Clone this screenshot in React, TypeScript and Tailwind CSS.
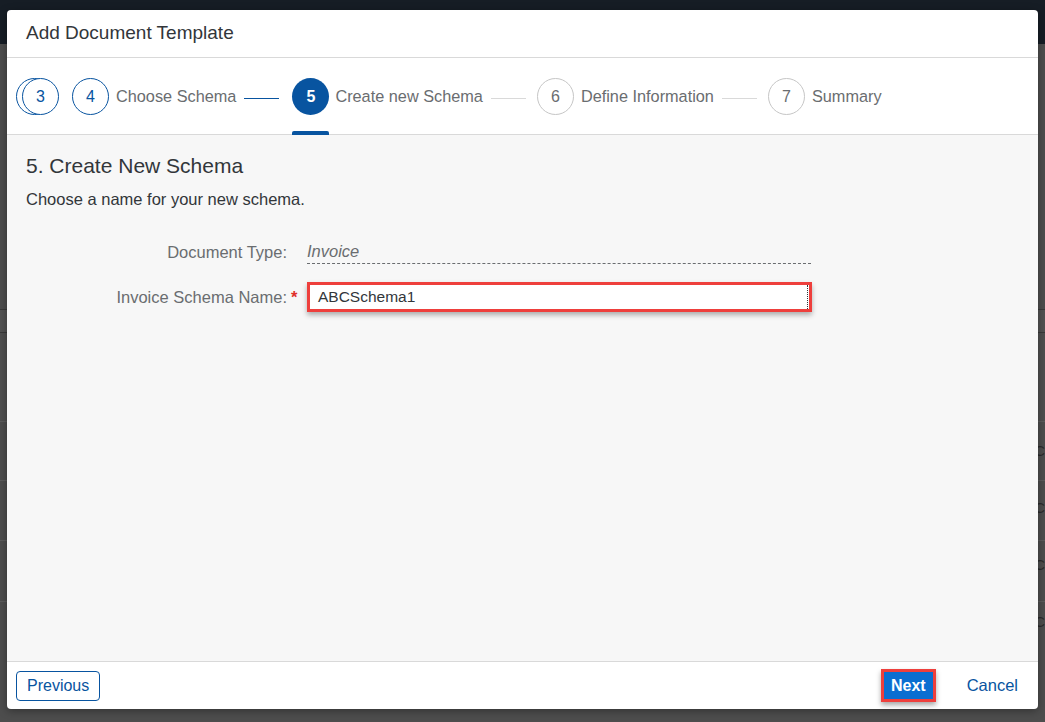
import React from "react";

const font = { fontFamily: '"Liberation Sans", Arial, sans-serif' };

function StepCircle({ n, state }: { n: number; state: "done" | "active" | "todo" }) {
  if (state === "active") {
    return (
      <div className="w-[37px] h-[37px] rounded-full bg-[#0854a0] flex items-center justify-center text-white text-[16px] font-bold shrink-0">
        {n}
      </div>
    );
  }
  return (
    <div
      className={
        "w-[37px] h-[37px] rounded-full bg-white flex items-center justify-center text-[16px] shrink-0 border " +
        (state === "done" ? "border-[#0854a0] text-[#0854a0]" : "border-[#c6c6c6] text-[#6a6d70]")
      }
    >
      {n}
    </div>
  );
}

function Connector({ done }: { done?: boolean }) {
  return <div className={"w-[35px] h-px mx-2 mt-[3px] " + (done ? "bg-[#0854a0]" : "bg-[#d9d9d9]")} />;
}

export default function App() {
  return (
    <div className="relative w-[1045px] h-[722px] bg-[#4d4d4d] overflow-hidden" style={font}>
      {/* dimmed page behind the dialog */}
      <div className="h-[44px] bg-[#161d25]" />
      <div className="h-[265px]" />
      <div className="h-px bg-[#3a3a3a]" />
      <div className="h-[22px] bg-[#525252]" />
      <div className="h-px bg-[#3a3a3a]" />
      <div className="h-[88px] bg-[#4f4f4f]" />
      <div className="h-px bg-[#5c5c5c]" />
      <div className="h-[58px]" />
      <div className="h-px bg-[#5c5c5c]" />
      <div className="h-[59px]" />
      <div className="h-px bg-[#5c5c5c]" />
      <div className="h-[60px]" />
      <div className="h-px bg-[#5c5c5c]" />
      <div className="absolute right-0 top-[443px] flex flex-col gap-[42px] text-[15px] text-[#2a2a2a] leading-none">
        <span>.C</span>
        <span>.C</span>
        <span>.C</span>
        <span>.C</span>
      </div>

      {/* dialog */}
      <div className="absolute left-[7px] top-[10px] w-[1031px] h-[699px] bg-white rounded-[4px] shadow-[0_2px_8px_rgba(0,0,0,0.35)] flex flex-col overflow-hidden">
        <div className="h-[48px] border-b border-[#d9d9d9] flex items-center pl-[19px] text-[19px] text-[#32363a]">
          Add Document Template
        </div>

        <div className="h-[77px] border-b border-[#d9d9d9] flex items-start pt-[20px] pl-[9px] text-[16.3px] text-[#6a6d70]">
          <div className="relative w-[43px] h-[38px] shrink-0 flex justify-end">
            <div className="absolute left-0 top-0 w-[37px] h-[37px] rounded-full border border-[#0854a0] bg-white" />
            <div className="relative">
              <StepCircle n={3} state="done" />
            </div>
          </div>
          <div className="ml-[13px] flex items-center h-[37px]">
            <StepCircle n={4} state="done" />
            <span className="ml-[7px]">Choose Schema</span>
            <Connector done />
          </div>
          <div className="ml-[5px] flex flex-col items-start">
            <div className="flex items-center h-[37px]">
              <StepCircle n={5} state="active" />
              <span className="ml-[6px]">Create new Schema</span>
              <Connector />
            </div>
            <div className="mt-[16px] w-[37px] h-[4px] rounded-t-[2px] bg-[#0854a0]" />
          </div>
          <div className="ml-[3px] flex items-center h-[37px]">
            <StepCircle n={6} state="todo" />
            <span className="ml-[7px]">Define Information</span>
            <Connector />
          </div>
          <div className="ml-[3px] flex items-center h-[37px]">
            <StepCircle n={7} state="todo" />
            <span className="ml-[7px]">Summary</span>
          </div>
        </div>

        <div className="flex-1 bg-[#f7f7f7] pl-[19px] pt-[19px]">
          <div className="text-[21px] text-[#32363a] leading-[24px]">5. Create New Schema</div>
          <div className="mt-[11px] text-[16.5px] leading-[20px] text-[#32363a]">Choose a name for your new schema.</div>

          <div className="mt-[31px] flex flex-col gap-[18px] text-[16.5px]">
            <div className="flex items-center h-[24px]">
              <div className="w-[276px] flex justify-end text-[#6a6d70]">
                <span>Document Type:</span>
                <span className="w-[15px]" />
              </div>
              <div className="ml-[5px] w-[504px] h-[24px] flex items-center border-b border-dashed border-[#6a6d70] italic text-[#6a6d70]">
                Invoice
              </div>
            </div>
            <div className="flex items-center h-[30px]">
              <div className="w-[276px] flex justify-end text-[#6a6d70]">
                <span>Invoice Schema Name:</span>
                <span className="w-[15px] pl-[4px] text-[#e0302b] font-bold">*</span>
              </div>
              <div className="ml-[5px] w-[505px] h-[30px] border-[3px] border-[#ee3f3c] bg-white shadow-[0_3px_5px_rgba(0,0,0,0.3)] flex items-center pl-[8px] text-[15.5px] text-[#32363a] relative">
                ABCSchema1
                <div className="absolute right-[1px] top-0 bottom-0 border-r border-dotted border-[#32363a]" />
              </div>
            </div>
          </div>
        </div>

        <div className="h-[48px] border-t border-[#d9d9d9] flex items-center justify-between pl-[9px] pr-[20px]">
          <button className="h-[30px] px-[10px] rounded-[4px] border border-[#0854a0] text-[#0854a0] text-[16px] bg-white">
            Previous
          </button>
          <div className="flex items-center gap-[31px]">
            <button className="h-[33px] px-[7px] bg-[#0a6ed1] border-[3px] border-[#ee3f3c] text-white font-bold text-[16px] shadow-[0_3px_5px_rgba(0,0,0,0.35)]">
              Next
            </button>
            <span className="text-[16.5px] text-[#0854a0]">Cancel</span>
          </div>
        </div>
      </div>
    </div>
  );
}
